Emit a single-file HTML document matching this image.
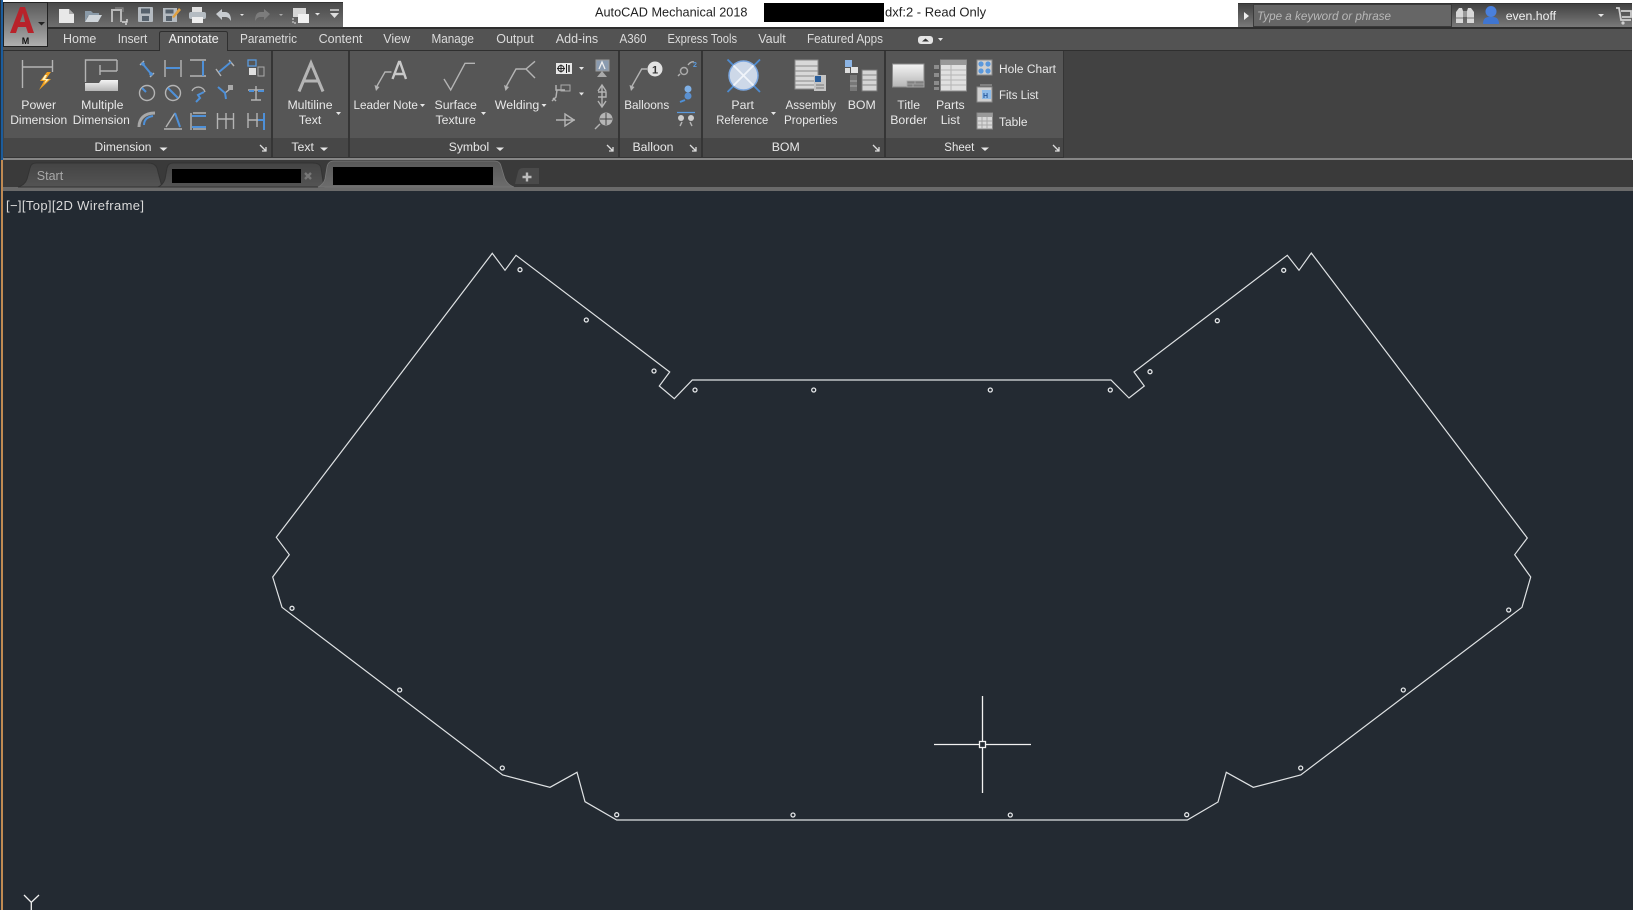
<!DOCTYPE html>
<html><head><meta charset="utf-8"><style>
html,body{margin:0;padding:0;background:#232a32;width:1633px;height:910px;overflow:hidden}
svg{display:block;position:absolute;left:0;top:0}
text{font-family:"Liberation Sans",sans-serif;font-size:12.5px;fill:#e2e2e2}
.m{text-anchor:middle}
.t{font-size:12.5px;fill:#dcdcdc;text-anchor:middle}
.p{font-size:12.3px;fill:#e8e8e8;text-anchor:middle}
.ic{fill:none;stroke:#b4b4b4;stroke-width:1.4}
.b{fill:none;stroke:#4e90d8;stroke-width:2}
.tri{fill:#e6e6e6}
</style></head><body>
<svg width="1633" height="910" viewBox="0 0 1633 910" xmlns="http://www.w3.org/2000/svg">
<defs>
<linearGradient id="qat" x1="0" y1="0" x2="0" y2="1"><stop offset="0" stop-color="#4a4a4a"/><stop offset="1" stop-color="#6e6e6e"/></linearGradient>
<linearGradient id="app" x1="0" y1="0" x2="0" y2="1"><stop offset="0" stop-color="#5a5a5a"/><stop offset=".6" stop-color="#8a8a8a"/><stop offset="1" stop-color="#b0b0b0"/></linearGradient>
<linearGradient id="wh" x1="0" y1="0" x2="0" y2="1"><stop offset="0" stop-color="#f4f4f4"/><stop offset="1" stop-color="#b5b5b5"/></linearGradient>
<linearGradient id="tb" x1="0" y1="0" x2="0" y2="1"><stop offset="0" stop-color="#444"/><stop offset="1" stop-color="#545454"/></linearGradient>
<linearGradient id="ta" x1="0" y1="0" x2="0" y2="1"><stop offset="0" stop-color="#585858"/><stop offset="1" stop-color="#6c6c6c"/></linearGradient>
<linearGradient id="srch" x1="0" y1="0" x2="0" y2="1"><stop offset="0" stop-color="#3f3f3f"/><stop offset="1" stop-color="#7a7a7a"/></linearGradient>
</defs>

<!-- base -->
<rect width="1633" height="910" fill="#232a32"/>
<rect width="1633" height="28" fill="#fff"/>
<rect x="0" y="0" width="3" height="910" fill="#c08a52"/>
<rect x="0" y="0" width="3" height="160" fill="#1b5c9c"/>
<rect x="0" y="0" width="1" height="910" fill="#22303e"/>

<!-- ribbon backgrounds -->
<rect x="3" y="27" width="1630" height="2" fill="#2e2e2e"/>
<rect x="3" y="29" width="1630" height="21" fill="#535353"/>
<rect x="3" y="50" width="1630" height="1" fill="#2f2f2f"/>
<rect x="3" y="51" width="1630" height="107" fill="#424242"/>
<rect x="4" y="51" width="1060" height="87" fill="#565656"/>
<rect x="4" y="138" width="1060" height="20" fill="#474747"/>
<g fill="#353535"><rect x="271" y="51" width="2" height="107"/><rect x="348" y="51" width="2" height="107"/><rect x="618" y="51" width="2" height="107"/><rect x="701" y="51" width="2" height="107"/><rect x="884" y="51" width="2" height="107"/><rect x="1063" y="51" width="1" height="107"/><rect x="4" y="157" width="1060" height="1"/></g>
<rect x="3" y="158" width="1630" height="2" fill="#868686"/>
<rect x="3" y="160" width="1630" height="27" fill="#3a3a3a"/>
<rect x="3" y="187" width="1630" height="4" fill="#6a6a6a"/>

<!-- QAT -->
<rect x="47" y="3" width="296" height="24" fill="url(#qat)"/>
<rect x="47" y="2" width="296" height="1" fill="#333"/>
<!-- new -->
<path d="M59 9h10l5 5v9H59z" fill="#e8e8e8"/><path d="M69 9v5h5" fill="#aaa"/>
<!-- open -->
<path d="M85 22V11h6l2 2h6v3h-11l-3 6z" fill="#8a9aa8"/><path d="M85 22l4-7h13l-4 7z" fill="#cfd5da"/>
<!-- sheet set -->
<path d="M112 22V10h9v12" fill="none" stroke="#b8b8b8" stroke-width="2"/><path d="M115 8h8v4" fill="none" stroke="#888" stroke-width="1.2"/><path d="M122 22h5v-3m-2 5h2" fill="none" stroke="#eee" stroke-width="1.2"/>
<!-- save -->
<rect x="138" y="7" width="15" height="15" rx="1" fill="#b4bac0"/><rect x="141" y="8.500" width="9" height="5" fill="#56616c"/><rect x="142" y="16" width="7" height="5" fill="#56616c"/>
<!-- save as -->
<rect x="163" y="8" width="14" height="14" fill="#b4bac0"/><rect x="165.500" y="9.500" width="8" height="4" fill="#56616c"/><rect x="166" y="16" width="6" height="5" fill="#56616c"/><path d="M172 17l7-9 2 2-7 8z" fill="#e0a040"/>
<!-- print -->
<rect x="192" y="7" width="10" height="6" fill="#e0e0e0"/><rect x="189" y="12" width="17" height="7" rx="2" fill="#b5bcc2"/><rect x="192" y="17" width="11" height="6" fill="#eee"/>
<!-- undo -->
<path d="M216 14l6-5v3h3c4 0 6 3 6 9-2-3-3-4-6-4h-3v3z" fill="#c8ccd0"/>
<path d="M240 14h4l-2 2z" class="tri"/>
<!-- redo -->
<path d="M270 14l-6-5v3h-3c-4 0-6 3-6 9 2-3 3-4 6-4h3v3z" fill="#7c7c7c"/>
<path d="M279 14h4l-2 2z" fill="#aaa"/>
<!-- workspace -->
<rect x="293" y="8" width="13" height="9" fill="#d5d5d5"/><rect x="298" y="14" width="11" height="9" fill="#f0f0f0"/><path d="M293 18v5h4" fill="none" stroke="#bbb" stroke-width="1.4" stroke-dasharray="2 1"/>
<path d="M315 13h5l-2.500 2.500z" class="tri"/>
<path d="M330 10h9" stroke="#ddd" stroke-width="1.4"/><path d="M330 13h9l-4.500 5z" fill="#ddd"/>

<!-- app button -->
<rect x="3.500" y="2.500" width="44" height="44" fill="url(#app)" stroke="#222"/>
<path d="M10 33L20 7h5l9 26h-6l-2-6h-8l-2 6z M20 22h5l-2-9z" fill="#b8222a" fill-rule="evenodd"/>
<path d="M38 22h7l-3.500 3.500z" fill="#222"/>
<text x="25.500" y="44" class="m" style="font-size:9px;font-weight:bold;fill:#111">M</text>

<!-- tabs -->
<path d="M159.500 51V33.500q0-2 2-2h64q2 0 2 2V51" fill="#565656" stroke="#2f2f2f"/>
<g>
<text x="79.700" y="43" class="t">Home</text><text x="132.500" y="43" class="t" textLength="29.500" lengthAdjust="spacingAndGlyphs">Insert</text><text x="193.700" y="43" class="t" style="fill:#f2f2f2">Annotate</text><text x="268.500" y="43" class="t" textLength="57" lengthAdjust="spacingAndGlyphs">Parametric</text><text x="340.500" y="43" class="t">Content</text><text x="396.700" y="43" class="t">View</text><text x="452.700" y="43" class="t" textLength="42.500" lengthAdjust="spacingAndGlyphs">Manage</text><text x="515" y="43" class="t">Output</text><text x="577" y="43" class="t">Add-ins</text><text x="633" y="43" class="t" textLength="27" lengthAdjust="spacingAndGlyphs">A360</text><text x="702.300" y="43" class="t" textLength="69.500" lengthAdjust="spacingAndGlyphs">Express Tools</text><text x="772" y="43" class="t">Vault</text><text x="845" y="43" class="t" textLength="76" lengthAdjust="spacingAndGlyphs">Featured Apps</text>
</g>
<rect x="918" y="36" width="15" height="8" rx="3" fill="#e4e4e4"/><path d="M922 41.500h7l-3.500-3z" fill="#333"/><path d="M938 38h5l-2.500 3z" class="tri"/>

<!-- ribbon labels -->
<g>
<text x="38.700" y="109" class="p">Power</text><text x="38.700" y="124" class="p" textLength="57" lengthAdjust="spacingAndGlyphs">Dimension</text>
<text x="102.300" y="109" class="p">Multiple</text><text x="101.300" y="124" class="p" textLength="57" lengthAdjust="spacingAndGlyphs">Dimension</text>
<text x="310" y="109" class="p">Multiline</text><text x="310" y="124" class="p">Text</text>
<text x="385.700" y="109" class="p" textLength="64.500" lengthAdjust="spacingAndGlyphs">Leader Note</text>
<text x="455.700" y="109" class="p">Surface</text><text x="455.700" y="124" class="p">Texture</text>
<text x="517" y="109" class="p" textLength="44.500" lengthAdjust="spacingAndGlyphs">Welding</text>
<text x="646.700" y="109" class="p" textLength="45" lengthAdjust="spacingAndGlyphs">Balloons</text>
<text x="742.700" y="109" class="p">Part</text><text x="742.300" y="124" class="p" textLength="52" lengthAdjust="spacingAndGlyphs">Reference</text>
<text x="810.700" y="109" class="p" textLength="50.500" lengthAdjust="spacingAndGlyphs">Assembly</text><text x="810.700" y="124" class="p" textLength="53.500" lengthAdjust="spacingAndGlyphs">Properties</text>
<text x="861.700" y="109" class="p">BOM</text>
<text x="908.700" y="109" class="p">Title</text><text x="908.700" y="124" class="p">Border</text>
<text x="950.300" y="109" class="p">Parts</text><text x="950.300" y="124" class="p">List</text>
<text x="999" y="73" style="fill:#e8e8e8;font-size:12.300px" textLength="57" lengthAdjust="spacingAndGlyphs">Hole Chart</text><text x="999" y="99" style="fill:#e8e8e8;font-size:12.300px" textLength="39.500" lengthAdjust="spacingAndGlyphs">Fits List</text><text x="999" y="126" style="fill:#e8e8e8;font-size:12.300px" textLength="28.500" lengthAdjust="spacingAndGlyphs">Table</text>
<text x="123" y="151" class="p" textLength="57" lengthAdjust="spacingAndGlyphs">Dimension</text><text x="302.700" y="151" class="p">Text</text><text x="469" y="151" class="p" textLength="40.500" lengthAdjust="spacingAndGlyphs">Symbol</text><text x="653" y="151" class="p">Balloon</text><text x="785.700" y="151" class="p">BOM</text><text x="959.300" y="151" class="p" textLength="30" lengthAdjust="spacingAndGlyphs">Sheet</text>
</g>
<!-- drop arrows -->
<g class="tri">
<path d="M159.500 147.500h8l-4 3.500z"/><path d="M320 147.500h8l-4 3.500z"/><path d="M496 147.500h8l-4 3.500z"/><path d="M981 147.500h8l-4 3.500z"/>
<path d="M336 112h5l-2.500 3z"/><path d="M420 104h5l-2.500 3z"/><path d="M481 112h5l-2.500 3z"/><path d="M541.500 104h5l-2.500 3z"/><path d="M771 112h5l-2.500 3z"/>
<path d="M579 67h5l-2.500 3z"/><path d="M579 92.500h5l-2.500 3z"/>
</g>
<!-- launchers -->
<g fill="none" stroke="#ddd" stroke-width="1.300">
<path d="M260 145l6 6m-4 0h4v-4"/><path d="M607 145l6 6m-4 0h4v-4"/><path d="M690 145l6 6m-4 0h4v-4"/><path d="M873 145l6 6m-4 0h4v-4"/><path d="M1053 145l6 6m-4 0h4v-4"/>
</g>

<!-- Power Dimension icon -->
<path d="M22.500 60v28M52.500 60v12M23 67h29" class="ic"/>
<path d="M47 72l-7 9h4l-5 9 12-11h-5l5-7z" fill="#f0a020"/><path d="M45 75l-3 5h4l-2 4 5-5h-4l2-4z" fill="#fff3c0"/>
<!-- Multiple Dimension icon -->
<path d="M85.500 82V60H117M117 60v11M100 65v10M117 71H100M104 71h12" class="ic"/>
<path d="M85 83h14l2-3h17v11H85z" fill="url(#wh)"/>
<!-- small dim grid row 1 -->
<g>
<path d="M140 65l4-4M150 77l4-4" class="ic"/><path d="M142 63l10 12" class="b" stroke-width="1.800"/><circle cx="143" cy="64" r="1.800" fill="#4e90d8"/><circle cx="151" cy="74" r="1.800" fill="#4e90d8"/>
<path d="M165 60v17M181 60v17" class="ic"/><path d="M166 68h14" class="b"/>
<path d="M190 60h16M190 76h16" class="ic"/><path d="M203 61v15" class="b"/>
<path d="M216 69l5 7M229 60l5 6" class="ic"/><path d="M219 72l12-10" class="b" stroke-width="1.800"/>
<rect x="248" y="60" width="8" height="6" fill="none" stroke="#5a9ade" stroke-width="1.300"/><rect x="249" y="68" width="7" height="7" fill="#e0e0e0"/><path d="M258 67h6v9h-6z" fill="none" stroke="#aaa"/>
<!-- row 2 -->
<circle cx="147" cy="93" r="7.500" class="ic" stroke-width="2"/><path d="M146 92l-4-4" class="b"/>
<circle cx="173" cy="93" r="7.500" class="ic" stroke-width="2"/><path d="M168 88l10 10" class="b" stroke-width="1.600"/>
<path d="M192 91a7 7 0 0 1 13 1" class="ic" stroke-width="2"/><path d="M204 92l-6 3 2 3-4 4" class="b" stroke-width="1.600"/>
<path d="M225 93l5-4" class="ic"/><path d="M218 87l7 6 1 6" class="b" stroke-width="1.300"/><rect x="228" y="85" width="5" height="5" fill="#aaa"/>
<path d="M248 90h16M256 86v14M251 100h10" class="ic"/><path d="M249 91h5M258 91h6" class="b"/>
<!-- row 3 -->
<path d="M139 127c0-8 5-14 16-14" fill="none" stroke="#a8a8a8" stroke-width="3"/><path d="M144 125c0-5 3-8 9-9" class="b" stroke-width="1.500"/>
<path d="M164 129h18M166 127l9-14" class="ic"/><path d="M175 113l5 14" class="b" stroke-width="1.500"/>
<path d="M191 113v17M206 113h-13M206 129h-13" class="ic"/><path d="M192 116h14M192 127h14" class="b" stroke-width="1.400"/>
<path d="M217.500 113v16M226 113v16M233.500 113v16M218 119h15" class="ic"/>
<path d="M248 113v15M257 113v14M248 120h15" class="ic"/><path d="M264 113v17" class="b" stroke-width="1.800"/><path d="M258 120h5" class="b" stroke-width="1.300"/>
</g>
<!-- A -->
<path d="M299 91.500L311 63l12 28.500M303 81h16" fill="none" stroke="#b5b5b5" stroke-width="3"/>
<!-- Leader note -->
<path d="M377 86l8-14h6.500" class="ic"/><path d="M374.500 85l5 2-3.500 4z" fill="#b4b4b4"/>
<path d="M392.500 79l6.500-17h1l6 17M395 74h9" fill="none" stroke="#c8c8c8" stroke-width="2.400"/>
<!-- surface -->
<path d="M444 79l6.700 11L465 63.300h10" class="ic"/>
<!-- welding -->
<path d="M506.500 86l9.500-17h10M535 61.300L526 69l9 9" class="ic"/><path d="M504 85l5 2-3.500 4z" fill="#b4b4b4"/>
<!-- symbol col -->
<rect x="556" y="63" width="16" height="11" fill="#e8e8e8"/><circle cx="561" cy="68.500" r="3" fill="none" stroke="#222"/><path d="M561 64.500v8M557 68.500h8M566.500 64v9" stroke="#222" stroke-width="1"/><path d="M569 65v7" stroke="#222" stroke-width="1.400"/>
<path d="M556 85v5h9M557 90l-1 7-4 4" class="ic"/><rect x="561" y="85" width="9" height="6" fill="none" stroke="#aaa"/><path d="M553 98l3 3" class="ic"/>
<path d="M556 120h19M565 114l9 6-9 6z" class="ic"/>
<rect x="596" y="60" width="13" height="11" fill="#8a9bb0" stroke="#999"/><path d="M599 69l3-7 3 7" fill="none" stroke="#eee" stroke-width="1.300"/><path d="M602 71l5 6h-10z" fill="#aaa"/>
<path d="M602 85v22M598 91l4-6 4 6M598 101l4 6 4-6" class="ic"/><path d="M598 92h8v5h-8" class="ic"/>
<circle cx="606" cy="119" r="6.500" fill="#b5b5b5"/><path d="M606 113v12M600 119h12" stroke="#444" stroke-width="1"/><path d="M600 124l-5 5" class="ic"/>
<!-- balloons -->
<path d="M632 86l9.700-17h5.500" class="ic"/><path d="M629.500 85l5 2-3.500 4z" fill="#b4b4b4"/>
<circle cx="655" cy="69" r="7.500" fill="#e2e2e2"/><text x="655" y="73.500" class="m" style="font-size:11px;font-weight:bold;fill:#333">1</text>
<circle cx="684" cy="71" r="3.500" fill="none" stroke="#aaa" stroke-width="1.500"/><path d="M688 65q3-4 6-3" class="ic"/><path d="M678 76l2-2" class="ic"/><text x="693" y="67" style="font-size:7px;fill:#5a9ade;font-weight:bold">2</text>
<circle cx="688" cy="89" r="3.500" fill="#7fb0e6"/><circle cx="688" cy="96" r="3.500" fill="#5a90d0"/><path d="M680 102l5-2" class="b"/>
<path d="M677 112.500h18" stroke="#5a9ade" stroke-width="1.300"/><circle cx="681" cy="118" r="3" fill="#ccc"/><circle cx="691" cy="118" r="3" fill="#ccc"/><path d="M682 122l-2 4M690 122l2 4" class="ic"/>
<!-- part reference -->
<path d="M727.500 59.500L760 92M760 59.500L727.500 92" stroke="#4e8bd0" stroke-width="1.800"/>
<circle cx="743.500" cy="75.500" r="14.500" fill="#cdd8e8" stroke="#7ba7e0" stroke-width="1.500"/>
<path d="M733.500 65.500l20 20M753.500 65.500l-20 20" stroke="#f0f4fa" stroke-width="1.800"/>
<!-- assembly -->
<rect x="795" y="60" width="23" height="29" fill="#d8d8d8" stroke="#8a8a8a"/><path d="M795 66h23M795 71h23M795 76h23M795 81h23M795 85h23" stroke="#8a8a8a"/>
<rect x="814" y="75" width="12" height="16" fill="#c4c4c4"/><rect x="815" y="76" width="6" height="6" fill="#2b5f9c"/><path d="M816 85h8M816 88h8" stroke="#777"/>
<!-- BOM -->
<rect x="845" y="60" width="7" height="7" fill="#8cb4e4"/><rect x="851" y="67" width="7" height="6" fill="#e4e4e4"/><rect x="845" y="68" width="5" height="5" fill="#ddd"/>
<rect x="862" y="70" width="15" height="21" fill="#d4d4d4" stroke="#777"/><path d="M862 75h15M862 80h15M862 85h15" stroke="#888"/>
<path d="M850 75v16h7V75z" fill="#777"/><path d="M850 81h7M850 86h7" stroke="#aaa"/>
<!-- title border -->
<rect x="892.500" y="64" width="31.500" height="23" fill="url(#wh)" stroke="#8a8a8a"/><path d="M907 87v-6h17v6zM907 84h17M915 81v3M913 84v3" fill="#808080" stroke="#aaa" stroke-width=".8"/>
<!-- parts list -->
<path d="M934 65h5v4h-5zM934 73h5v4h-5zM934 81h5v4h-5zM934 87h5v3h-5z" fill="#8c8c8c"/>
<rect x="940.500" y="60" width="26" height="31" fill="#e0e0e0" stroke="#8a8a8a"/><rect x="941" y="60" width="25" height="5" fill="#999"/><path d="M941 70h25M941 75h25M941 80h25M941 85h25M951 65v26" stroke="#b5b5b5"/>
<!-- hole chart -->
<rect x="977" y="60" width="15" height="15" fill="#cfcfcf" stroke="#888"/><g fill="#5a98dc"><circle cx="981" cy="64" r="2.600"/><circle cx="988" cy="64" r="2.600"/><circle cx="981" cy="71" r="2.600"/><circle cx="988" cy="71" r="2.600"/></g>
<!-- fits -->
<rect x="977" y="87" width="15" height="15" fill="#cfcfcf" stroke="#888"/><path d="M980 85h12" stroke="#aaa"/><rect x="982" y="90" width="9" height="9" fill="#8fbbe8"/><text x="983" y="98" style="font-size:7px;font-weight:bold;fill:#2a5a9c">H</text>
<!-- table -->
<rect x="977" y="113" width="15.500" height="16" fill="#d8d8d8" stroke="#888"/><rect x="977.500" y="113" width="15" height="4" fill="#9a9a9a"/><path d="M977 121h15M977 125h15M982 117v12M987 117v12" stroke="#a8a8a8"/>

<!-- doc tabs -->
<path d="M18 187q7-2 9-8l3-11q1-5 6-5h112q7 0 9 5l5 19z" fill="url(#tb)" stroke="#333"/>
<text x="50" y="180" class="m" style="fill:#a8a8a8">Start</text>
<path d="M158 187q5-2 7-8l2-11q1-5 6-5h140q7 0 8 5l3 19z" fill="url(#tb)" stroke="#333"/>
<rect x="172" y="169" width="129" height="14" fill="#000"/>
<path d="M305 173l6 6m0-6l-6 6" stroke="#777" stroke-width="2.400"/>
<path d="M318 187q5-2 7-8l2-12q1-6 7-6h160q6 0 7 5l3 10q2 8 10 11z" fill="url(#ta)" stroke="#777" stroke-width=".8"/>
<rect x="333" y="167" width="160" height="18" fill="#000"/>
<path d="M515 184l3-12q1-4 5-4h16v16z" fill="#4a4a4a"/><path d="M527 172.500v9M522.500 177h9" stroke="#bcbcbc" stroke-width="2.400"/>

<!-- title -->
<text x="595" y="16.500" style="font-size:13px;fill:#222" textLength="152.500" lengthAdjust="spacingAndGlyphs">AutoCAD Mechanical 2018</text>
<rect x="764" y="3" width="120" height="19" fill="#000"/>
<text x="885" y="16.500" style="font-size:13px;fill:#222">dxf:2 - Read Only</text>

<!-- search -->
<rect x="1238" y="3" width="395" height="24" fill="url(#srch)"/>
<rect x="1238" y="3" width="395" height="1" fill="#333"/>
<path d="M1244 12l5 4-5 4z" fill="#eee"/>
<rect x="1253.500" y="4.500" width="198" height="22" fill="#666" stroke="#3a3a3a"/>
<text x="1257" y="20" style="font-size:12px;font-style:italic;fill:#b8b8b8" textLength="134" lengthAdjust="spacingAndGlyphs">Type a keyword or phrase</text>
<path d="M1456 23V12l3-4h3l1 3v12zM1467 23V11l1-3h3l3 4v11z" fill="#d8d8d8"/><rect x="1463" y="11" width="4" height="6" fill="#999"/><path d="M1456 18h7M1467 18h7" stroke="#777"/>
<circle cx="1491" cy="11.500" r="5.500" fill="#4a80dc"/><path d="M1483 24q0-7 6-7h4q6 0 6 7z" fill="#3f75d0"/>
<text x="1505.700" y="20" style="font-size:12.300px;fill:#f0f0f0">even.hoff</text>
<path d="M1598 14h6l-3 3z" fill="#e6e6e6"/>
<path d="M1616 8h3l2 12h10M1621 11h10v6h-9" fill="none" stroke="#cfcfcf" stroke-width="1.800"/><circle cx="1623" cy="23" r="1.600" fill="#cfcfcf"/>
<rect x="1632" y="0" width="1" height="160" fill="#fff"/>

<!-- canvas label -->
<text x="6" y="210" style="font-size:13px;fill:#dadada" textLength="138">[−][Top][2D Wireframe]</text>

<!-- drawing -->
<path d="M492.300 253.300L505 270.300L516 255.300L669.700 372L659.300 386L674.300 398.700L692.300 380H1111L1129 398L1144.300 386L1134 372L1287.300 255.300L1299 270.300L1311.300 253L1527.300 538L1514.700 554.700L1530.700 577L1522 607.300L1300.700 775L1253.300 787.300L1226.300 772.300L1218 802L1187.300 820H616.700L585 801.700L577 772.300L550 787.300L502.700 775L282 607.300L272.700 577L289.300 554.700L276.300 537.300Z" fill="none" stroke="#dfe2e4" stroke-width="1.200"/>
<g fill="none" stroke="#e4e6e8" stroke-width="1.300">
<circle cx="520" cy="269.700" r="2"/><circle cx="586.300" cy="320" r="2"/><circle cx="654" cy="371" r="2"/><circle cx="695" cy="390" r="2"/><circle cx="813.700" cy="390" r="2"/><circle cx="990.300" cy="390" r="2"/><circle cx="1110.300" cy="390" r="2"/><circle cx="1150" cy="371.700" r="2"/><circle cx="1217.300" cy="320.700" r="2"/><circle cx="1283.700" cy="270.300" r="2"/><circle cx="1508.700" cy="610" r="2"/><circle cx="1403.300" cy="690" r="2"/><circle cx="1300.700" cy="768" r="2"/><circle cx="1186.700" cy="814.700" r="2"/><circle cx="1010.300" cy="815" r="2"/><circle cx="793" cy="815" r="2"/><circle cx="616.700" cy="814.700" r="2"/><circle cx="502.300" cy="768" r="2"/><circle cx="399.700" cy="690" r="2"/><circle cx="292" cy="608.300" r="2"/>
</g>
<!-- crosshair -->
<path d="M934 744.500H979M986 744.500H1031M982.500 696V741M982.500 748V793" stroke="#f2f2f2" stroke-width="1.300" fill="none"/>
<rect x="979.500" y="741.500" width="6" height="6" fill="none" stroke="#f2f2f2" stroke-width="1.300"/>
<!-- UCS -->
<path d="M24 895L31.300 902.300L39 895M31.300 902V910" stroke="#f0f0f0" stroke-width="1.300" fill="none"/>
</svg>
</body></html>
